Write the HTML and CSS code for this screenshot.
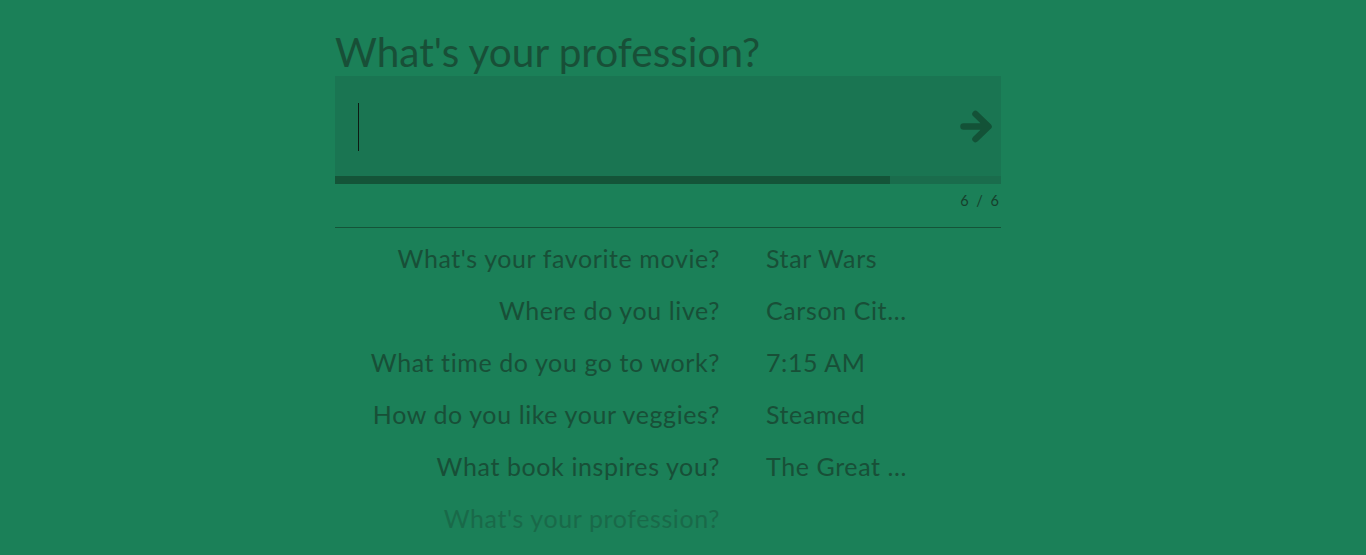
FILE: index.html
```html
<!DOCTYPE html>
<html lang="en">
<head>
<meta charset="utf-8">
<title>Questionnaire</title>
<link rel="stylesheet" href="styles.css">
</head>
<body>
<main class="wrap">
  <h1 class="title">What's your profession?</h1>
  <div class="field">
    <div class="input">
      <span class="caret"></span>
      <button class="next" aria-label="Next">
        <svg width="36" height="36" viewBox="0 0 36 36"><path d="M5.5 17.5H30M17.5 5L30.5 17.5L17.5 30" fill="none" stroke="currentColor" stroke-width="6.5" stroke-linecap="round" stroke-linejoin="round"/></svg>
      </button>
    </div>
    <div class="bar"><div class="fill" style="width:83.4%"></div></div>
  </div>
  <div class="counter">6 / 6</div>
  <hr class="rule">
  <ul class="history">
    <li class="row"><span class="q">What's your favorite movie?</span><span class="a">Star Wars</span></li>
    <li class="row"><span class="q">Where do you live?</span><span class="a">Carson Cit...</span></li>
    <li class="row"><span class="q">What time do you go to work?</span><span class="a">7:15 AM</span></li>
    <li class="row"><span class="q">How do you like your veggies?</span><span class="a">Steamed</span></li>
    <li class="row"><span class="q">What book inspires you?</span><span class="a">The Great ...</span></li>
    <li class="row current"><span class="q">What's your profession?</span><span class="a"></span></li>
  </ul>
</main>
</body>
</html>
```
FILE: styles.css
```css
html, body {
  margin: 0;
  padding: 0;
  height: 100%;
  overflow: hidden;
}
body {
  background: #1b8058;
  font-family: Lato, "Open Sans", sans-serif;
  color: #184f37;
  padding-right: 30px;
  box-sizing: border-box;
}
.wrap {
  width: 666px;
  margin: 0 auto;
  padding-top: 32px;
}
.title {
  margin: 0 0 4px;
  font-size: 40.5px;
  line-height: 40px;
  font-weight: 400;
  color: #184f37;
}
.input {
  height: 100px;
  background: #1a7552;
  display: flex;
  align-items: center;
  justify-content: space-between;
  padding: 0 7px 0 23px;
  box-sizing: border-box;
}
.caret {
  width: 1px;
  height: 48px;
  background: #0c1a12;
  margin-top: 2px;
}
.next {
  background: none;
  border: 0;
  padding: 0;
  color: #135237;
  display: flex;
  margin-top: 1px;
}
.bar {
  height: 8px;
  background: #1a6c4c;
}
.fill {
  height: 100%;
  background: #145438;
}
.counter {
  margin-top: 7px;
  text-align: right;
  font-size: 14.5px;
  line-height: 20px;
  letter-spacing: 2px;
  color: #163f2c;
}
.rule {
  margin: 16px 0 0;
  border: 0;
  border-top: 1px solid #145438;
  height: 0;
}
.history {
  list-style: none;
  margin: 4px 0 0;
  padding: 0;
}
.row {
  display: grid;
  grid-template-columns: 385px 200px;
  column-gap: 46px;
  font-size: 25px;
  letter-spacing: 0.6px;
  line-height: 52px;
}
.q {
  text-align: right;
}
.a {
  white-space: nowrap;
}
.current {
  opacity: 0.45;
}
```
